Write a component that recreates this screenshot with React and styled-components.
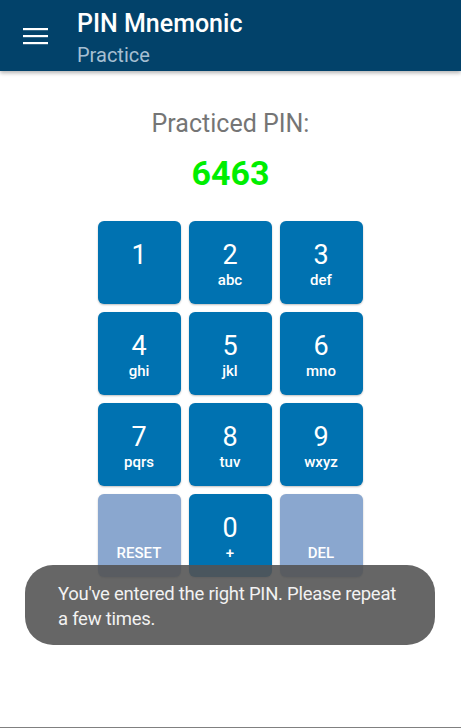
import React from "react";
import styled, { createGlobalStyle } from "styled-components";

const GlobalStyle = createGlobalStyle`
  body {
    margin: 0;
    background: #fff;
    font-family: Roboto, "Noto Sans", sans-serif;
  }
`;

const Page = styled.div`
  position: relative;
  height: 728px;
  box-sizing: border-box;
  border-bottom: 1px solid #808080;
  display: flex;
  flex-direction: column;
  overflow: hidden;
`;

const AppBar = styled.header`
  height: 71px;
  background-color: #02426a;
  display: flex;
  align-items: flex-start;
  box-shadow: 0 2px 4px rgba(0, 0, 0, 0.3);
  flex-shrink: 0;
  box-sizing: border-box;
`;

const MenuButton = styled.div`
  width: 77px;
  height: 71px;
  display: flex;
  align-items: center;
  justify-content: center;
  padding-right: 7px;
  box-sizing: border-box;
`;

const Titles = styled.div`
  display: flex;
  flex-direction: column;
  padding-top: 9px;
`;

const Title = styled.div`
  color: #fff;
  font-size: 25px;
  font-weight: 500;
  line-height: 30px;
`;

const Subtitle = styled.div`
  color: #a6bfd2;
  font-size: 20px;
  line-height: 24px;
  margin-top: 4px;
`;

const Content = styled.main`
  display: flex;
  flex-direction: column;
  align-items: center;
  padding-top: 39px;
`;

const Label = styled.div`
  color: #757575;
  font-size: 25px;
  line-height: 28px;
`;

const Pin = styled.div`
  color: #00ee00;
  font-size: 34px;
  font-weight: 700;
  line-height: 40px;
  margin-top: 15px;
`;

const Keypad = styled.div`
  display: grid;
  grid-template-columns: repeat(3, 83px);
  grid-auto-rows: 83px;
  gap: 8px;
  margin-top: 28px;
  margin-left: -1px;
`;

const Key = styled.div`
  background-color: ${(props) => (props.muted ? "#8aa7cf" : "#0072b1")};
  border-radius: 6px;
  box-shadow: 0 1px 2px rgba(0, 0, 0, 0.25);
  color: #fff;
  display: flex;
  flex-direction: column;
  align-items: center;
  padding-top: 19px;
  box-sizing: border-box;
`;

const Digit = styled.div`
  font-size: 27px;
  line-height: 30px;
  height: 30px;
`;

const Letters = styled.div`
  font-size: 15px;
  font-weight: 500;
  line-height: 18px;
  margin-top: 1px;
`;

const Toast = styled.div`
  position: absolute;
  left: 25px;
  top: 565px;
  width: 410px;
  height: 80px;
  box-sizing: border-box;
  border-radius: 28px;
  background-color: rgba(83, 83, 83, 0.89);
  color: #f2f2f2;
  font-size: 18.5px;
  letter-spacing: -0.25px;
  line-height: 25px;
  padding: 17px 27px 0 33px;
`;

const keys = [
  ["1", ""],
  ["2", "abc"],
  ["3", "def"],
  ["4", "ghi"],
  ["5", "jkl"],
  ["6", "mno"],
  ["7", "pqrs"],
  ["8", "tuv"],
  ["9", "wxyz"],
  ["", "RESET", true],
  ["0", "+"],
  ["", "DEL", true],
];

function MenuIcon() {
  return (
    <svg width="25" height="18" viewBox="0 0 25 18">
      <rect x="0" y="1" width="25" height="2.2" fill="#fff" />
      <rect x="0" y="8" width="25" height="2.2" fill="#fff" />
      <rect x="0" y="15" width="25" height="2.2" fill="#fff" />
    </svg>
  );
}

export default function App() {
  return (
    <Page>
      <GlobalStyle />
      <AppBar>
        <MenuButton>
          <MenuIcon />
        </MenuButton>
        <Titles>
          <Title>PIN Mnemonic</Title>
          <Subtitle>Practice</Subtitle>
        </Titles>
      </AppBar>
      <Content>
        <Label>Practiced PIN:</Label>
        <Pin>6463</Pin>
        <Keypad>
          {keys.map(([digit, letters, muted], i) => (
            <Key key={i} muted={muted}>
              <Digit>{digit}</Digit>
              <Letters>{letters}</Letters>
            </Key>
          ))}
        </Keypad>
      </Content>
      <Toast>You've entered the right PIN. Please repeat a few times.</Toast>
    </Page>
  );
}
